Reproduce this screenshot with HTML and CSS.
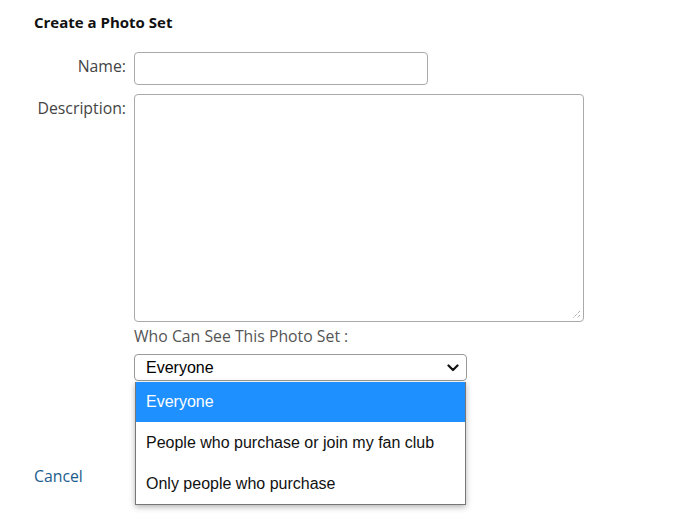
FILE: index.html
```html
<!DOCTYPE html>
<html>
<head>
<meta charset="utf-8">
<link rel="stylesheet" href="styles.css">
</head>
<body>
<div class="page">
  <h1 class="title">Create a Photo Set</h1>
  <div class="form">
    <label class="lbl lbl-name">Name:</label>
    <div class="field"><div class="input name-input"></div></div>
    <label class="lbl lbl-desc">Description:</label>
    <div class="field">
      <div class="input textarea">
        <svg class="grip" width="10" height="10" viewBox="0 0 10 10"><path d="M9 2 L2 9 M9 6 L6 9" stroke="#888" stroke-width="1" stroke-dasharray="1 1" fill="none"/></svg>
      </div>
    </div>
    <div></div>
    <div class="field vis">
      <div class="vis-label">Who Can See This Photo Set :</div>
      <div class="select-wrap">
        <div class="select">
          <span>Everyone</span>
          <svg class="chev" width="12" height="8" viewBox="0 0 12 8"><path d="M1.5 1.5 L6 6 L10.5 1.5" stroke="#111" stroke-width="2.2" fill="none" stroke-linecap="round" stroke-linejoin="round"/></svg>
        </div>
        <ul class="menu">
          <li class="opt active">Everyone</li>
          <li class="opt">People who purchase or join my fan club</li>
          <li class="opt">Only people who purchase</li>
        </ul>
      </div>
    </div>
  </div>
  <a class="cancel" href="#">Cancel</a>
</div>
</body>
</html>
```

FILE: styles.css
```css
html, body { margin: 0; padding: 0; background: #fff; }
body { font-family: "Open Sans", "Noto Sans", sans-serif; font-size: 15.8px; color: #444; min-height: 514px; }
.page { padding-top: 11px; min-height: 514px; box-sizing: border-box; }
.title { margin: 0 0 19px 34px; font-size: 15px; font-weight: 700; color: #111; line-height: 22px; }
.form { display: grid; grid-template-columns: 126px 1fr; column-gap: 8px; row-gap: 9px; }
.lbl { text-align: right; line-height: 20px; padding-top: 4px; color: #444; }
.input { box-sizing: border-box; border: 1px solid #aaa; border-radius: 4px; background: #fff; }
.name-input { width: 294px; height: 33px; }
.textarea { width: 450px; height: 228px; position: relative; }
.grip { position: absolute; right: 2px; bottom: 2px; }
.vis { margin-top: -5px; }
.vis-label { line-height: 20px; color: #555; margin-bottom: 8px; }
.select-wrap { position: relative; width: 333px; }
.select { box-sizing: border-box; height: 27px; border: 1px solid #999; border-radius: 4px; display: flex; align-items: center; justify-content: space-between; padding: 0 7px 0 11px; font-family: "Liberation Sans", Arial, sans-serif; font-size: 16px; color: #000; }
.chev { display: block; }
.menu { position: absolute; left: 1px; top: 28px; width: 331px; margin: 0; padding: 0; list-style: none; background: #fff; border: 1px solid #777; border-top: none; box-shadow: 0 2px 6px rgba(0,0,0,0.3); box-sizing: border-box; font-family: "Liberation Sans", Arial, sans-serif; font-size: 16px; color: #111; }
.opt { height: 41px; line-height: 41px; padding-left: 10px; }
.opt.active { background: #1e90ff; color: #fff; height: 40px; line-height: 40px; }
.cancel { display: inline-block; margin: 85px 0 0 34px; color: #1b5c8c; text-decoration: none; line-height: 20px; }
```
